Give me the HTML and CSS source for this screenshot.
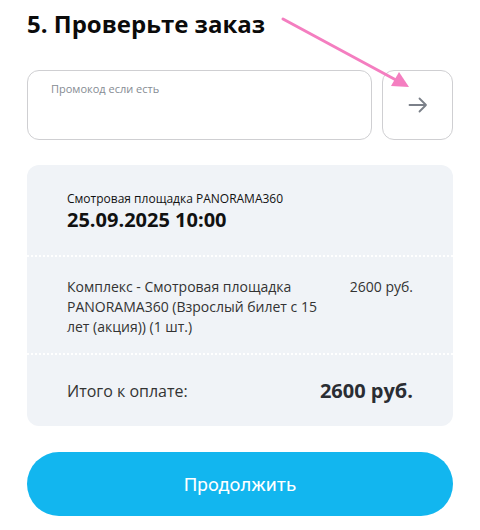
FILE: index.html
```html
<!DOCTYPE html>
<html lang="ru">
<head>
<meta charset="utf-8">
<link rel="stylesheet" href="styles.css">
</head>
<body>
<div class="page">
  <h1 class="title">5. Проверьте заказ</h1>
  <div class="promo-row">
    <div class="promo-input">
      <span class="placeholder">Промокод если есть</span>
    </div>
    <button class="promo-apply" type="button" aria-label="Применить">
      <svg width="20" height="16" viewBox="0 0 20 16" fill="none" stroke="#7b8089" stroke-width="1.8" stroke-linecap="round" stroke-linejoin="round">
        <path d="M1.5 8H18M11.5 1.5L18 8l-6.5 6.5"/>
      </svg>
    </button>
  </div>
  <div class="card">
    <div class="section event">
      <div class="event-name">Смотровая площадка PANORAMA360</div>
      <div class="event-date">25.09.2025 10:00</div>
    </div>
    <div class="section item">
      <div class="item-name">Комплекс - Смотровая площадка PANORAMA360 (Взрослый билет с 15 лет (акция)) (1 шт.)</div>
      <div class="item-price">2600 руб.</div>
    </div>
    <div class="section total">
      <div class="total-label">Итого к оплате:</div>
      <div class="total-price">2600 руб.</div>
    </div>
  </div>
  <button class="continue" type="button">Продолжить</button>
  <svg class="pointer" width="480" height="100" viewBox="0 0 480 100">
    <line x1="283" y1="19" x2="396" y2="80" stroke="#f47ec0" stroke-width="3" stroke-linecap="round"/>
    <polygon points="409,87 391,86 399,72" fill="#f47ec0"/>
  </svg>
</div>
</body>
</html>
```
FILE: styles.css
```css
* { box-sizing: border-box; }
html, body { margin: 0; padding: 0; background: #fff; }
body { font-family: "Open Sans", "Noto Sans", sans-serif; color: #111; }
.page {
  position: relative;
  width: 480px;
  padding: 9px 27px 0 27px;
  display: flex;
  flex-direction: column;
}
.title {
  margin: 0;
  font-size: 24px;
  line-height: 29px;
  font-weight: 700;
  color: #0b0b0b;
}
.promo-row {
  margin-top: 32px;
  display: flex;
  gap: 10px;
  height: 70px;
}
.promo-input {
  flex: 1;
  border: 1px solid #cfcfd2;
  border-radius: 12px;
  padding: 11px 23px;
}
.placeholder {
  font-size: 11px;
  line-height: 14px;
  color: #868b93;
  display: block;
}
.promo-apply {
  width: 71px;
  border: 1px solid #cfcfd2;
  border-radius: 12px;
  background: #fff;
  display: flex;
  align-items: center;
  justify-content: center;
  padding: 0;
}
.card {
  margin-top: 25px;
  background: #f0f3f7;
  border-radius: 12px;
  display: flex;
  flex-direction: column;
}
.section { padding: 0 40px; }
.section + .section { border-top: 2px dotted #ffffff; }
.event { height: 90px; padding-top: 25px; }
.event-name { font-size: 12px; line-height: 17px; color: #111; }
.event-date { font-size: 20px; line-height: 24px; font-weight: 700; margin-top: 1px; }
.item {
  height: 98px;
  padding-top: 20px;
  display: flex;
  justify-content: space-between;
  gap: 20px;
}
.item-name { font-size: 14px; line-height: 20px; color: #333; width: 260px; }
.item-price { font-size: 14px; line-height: 20px; color: #333; white-space: nowrap; }
.total {
  height: 73px;
  display: flex;
  justify-content: space-between;
  align-items: center;
}
.total-label { font-size: 16px; color: #333; }
.total-price { font-size: 20px; font-weight: 700; color: #2a2d33; }
.continue {
  margin-top: 26px;
  height: 64px;
  border: none;
  border-radius: 32px;
  background: #12b6ef;
  color: #fff;
  font-family: Roboto, "Liberation Sans", sans-serif;
  font-size: 19px;
}
.pointer { position: absolute; left: 0; top: 0; pointer-events: none; }
```
